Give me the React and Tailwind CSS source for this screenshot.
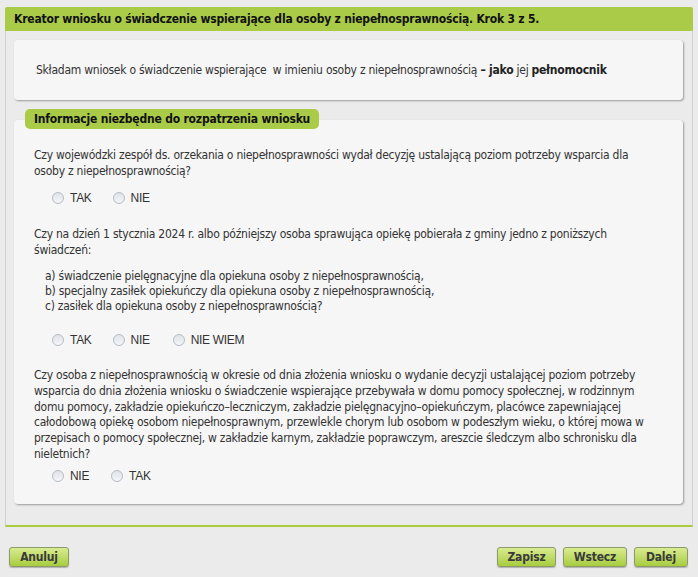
import React from "react";

const body = { fontFamily: "'DejaVu Sans Condensed', 'DejaVu Sans', sans-serif", fontStretch: "condensed" };
const arial = { fontFamily: "'Liberation Sans', Arial, sans-serif" };

function Radio({ label, className = "" }) {
  return (
    <label className={"flex items-center gap-[6px] " + className}>
      <span className="w-[12px] h-[12px] rounded-full border border-[#b5bcc4] bg-gradient-to-b from-[#dfe3e8] to-[#f4f6f8] inline-block" />
      <span className="text-[12px] tracking-[-0.3px] text-[#333]" style={arial}>{label}</span>
    </label>
  );
}

function Btn({ children, w }) {
  return (
    <button
      className={"h-[20px] rounded-[3px] border border-[#8a9a6a] bg-gradient-to-b from-[#d9ec8e] to-[#a8cc3c] text-[12px] tracking-[-0.2px] font-bold text-[#3a3a3a] shadow-[0_1px_1px_rgba(0,0,0,0.25)] " + w}
      style={body}
    >
      {children}
    </button>
  );
}

export default function App() {
  return (
    <div className="w-[698px] h-[577px] bg-[#ebebeb] text-[#333] overflow-hidden" style={body}>
      <div className="pt-[7px] px-[5px]">
        <div className="h-[24px] bg-[#aacb48] rounded-t-[2px] flex items-center pl-[9px] text-[12px] tracking-[-0.2px] font-bold text-[#111]">
          Kreator wniosku o świadczenie wspierające dla osoby z niepełnosprawnością. Krok 3 z 5.
        </div>
        <div className="border-l border-r border-[#cfcfcf] border-b-2 border-b-[#a8cc3c] pt-[9px] pb-[21px] pl-[8px] pr-[9px]">
          <div className="h-[60px] bg-[#f6f6f6] rounded-[4px] shadow-[1px_1px_2px_rgba(0,0,0,0.35)] flex items-center pl-[22px] text-[12px] tracking-[-0.25px]">
            <span>Składam wniosek o świadczenie wspierające&nbsp; w imieniu osoby z niepełnosprawnością <b className="text-[#222]">– jako</b> jej <b className="text-[#222]">pełnomocnik</b></span>
          </div>
          <div className="relative mt-[20px] bg-[#f6f6f6] rounded-[4px] shadow-[1px_1px_2px_rgba(0,0,0,0.35)] pt-[27px] pb-[20px] pl-[20px] pr-[24px] text-[12px] tracking-[-0.25px] leading-[16px]">
            <div className="absolute left-[11px] -top-[11px] h-[20px] px-[9px] bg-[#aacb48] rounded-[5px] flex items-center text-[12px] tracking-[-0.2px] font-bold text-[#111]">
              Informacje niezbędne do rozpatrzenia wniosku
            </div>
            <p>Czy wojewódzki zespół ds. orzekania o niepełnosprawności wydał decyzję ustalającą poziom potrzeby wsparcia dla osoby z niepełnosprawnością?</p>
            <div className="flex items-center mt-[11px] pl-[18px]">
              <Radio label="TAK" className="mr-[21px]" />
              <Radio label="NIE" />
            </div>
            <p className="mt-[20px]">Czy na dzień 1 stycznia 2024 r. albo późniejszy osoba sprawująca opiekę pobierała z gminy jedno z poniższych świadczeń:</p>
            <div className="mt-[11px] pl-[11px] leading-[15px]">
              <div>a) świadczenie pielęgnacyjne dla opiekuna osoby z niepełnosprawnością,</div>
              <div>b) specjalny zasiłek opiekuńczy dla opiekuna osoby z niepełnosprawnością,</div>
              <div>c) zasiłek dla opiekuna osoby z niepełnosprawnością?</div>
            </div>
            <div className="flex items-center mt-[18px] pl-[18px]">
              <Radio label="TAK" className="mr-[21px]" />
              <Radio label="NIE" className="mr-[23px]" />
              <Radio label="NIE WIEM" />
            </div>
            <p className="mt-[20px] leading-[15.8px]">Czy osoba z niepełnosprawnością w okresie od dnia złożenia wniosku o wydanie decyzji ustalającej poziom potrzeby wsparcia do dnia złożenia wniosku o świadczenie wspierające przebywała w domu pomocy społecznej, w rodzinnym domu pomocy, zakładzie opiekuńczo–leczniczym, zakładzie pielęgnacyjno–opiekuńczym, placówce zapewniającej całodobową opiekę osobom niepełnosprawnym, przewlekle chorym lub osobom w podeszłym wieku, o której mowa w przepisach o pomocy społecznej, w zakładzie karnym, zakładzie poprawczym, areszcie śledczym albo schronisku dla nieletnich?</p>
            <div className="flex items-center mt-[5px] pl-[18px]">
              <Radio label="NIE" className="mr-[22px]" />
              <Radio label="TAK" />
            </div>
          </div>
        </div>
        <div className="flex items-center mt-[20px] pl-[4px] pr-[5px]">
          <Btn w="w-[60px]">Anuluj</Btn>
          <div className="flex-1" />
          <div className="flex gap-[7px]">
            <Btn w="w-[59px]">Zapisz</Btn>
            <Btn w="w-[64px]">Wstecz</Btn>
            <Btn w="w-[54px]">Dalej</Btn>
          </div>
        </div>
      </div>
    </div>
  );
}
